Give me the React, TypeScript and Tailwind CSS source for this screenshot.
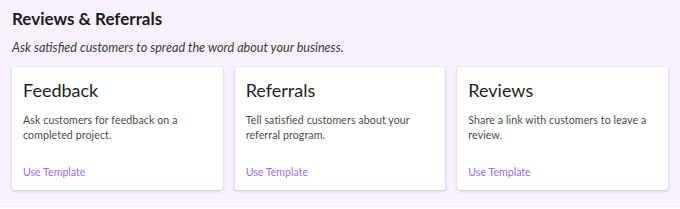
const templates = [
  { title: "Feedback", body: "Ask customers for feedback on a completed project." },
  { title: "Referrals", body: "Tell satisfied customers about your referral program." },
  { title: "Reviews", body: "Share a link with customers to leave a review." },
];

export default function App() {
  return (
    <div className="bg-white" style={{ fontFamily: "Lato, 'Noto Sans', sans-serif" }}>
      <section className="h-[207px] bg-[#f6f1fd] px-3 pt-[7px]">
        <h1 className="text-[17px] font-bold leading-6 text-[#1b1b1f]">Reviews &amp; Referrals</h1>
        <p className="mt-[9px] text-[12.6px] italic leading-4 text-[#3a3a40]">
          Ask satisfied customers to spread the word about your business.
        </p>
        <div className="mt-[11px] grid grid-cols-3 gap-3">
          {templates.map((t) => (
            <div
              key={t.title}
              className="flex h-[123px] flex-col rounded-[3px] bg-white px-[11px] pt-[11px] shadow-[0_1px_3px_rgba(60,40,90,0.25)]"
            >
              <h2 className="text-[18px] leading-6 text-[#1f1f24]">{t.title}</h2>
              <p className="mt-[11px] text-[10.6px] leading-[15px] tracking-[0.1px] text-[#4a4a50]">{t.body}</p>
              <a className="mt-auto mb-[10px] text-[10.6px] leading-4 text-[#9b6cf0]">Use Template</a>
            </div>
          ))}
        </div>
      </section>
    </div>
  );
}
